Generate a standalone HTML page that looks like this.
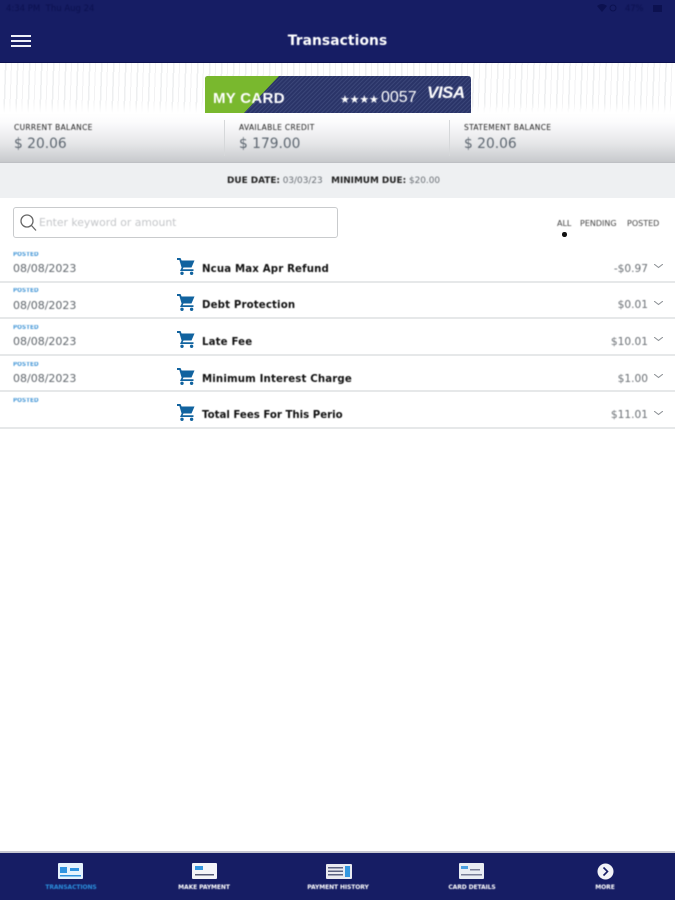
<!DOCTYPE html>
<html>
<head>
<meta charset="utf-8">
<style>
html,body{margin:0;padding:0;background:#fff}
#p{position:relative;width:675px;height:900px;overflow:hidden;background:#fff;font-family:"DejaVu Sans","Liberation Sans",sans-serif}
#p div,#p svg{position:absolute}
.t{white-space:nowrap;filter:blur(.45px)}
.lab{font-size:7.5px;color:#222;top:123px;letter-spacing:.33px}
.bal{font-size:13.8px;color:#5d6670;top:136px}
.sep{top:120px;width:1px;height:36px;background:#d6d8da}
.pos{font-size:5.7px;font-weight:bold;color:#4a9ad8;left:13px}
.date{font-size:11px;color:#60666c;left:13px}
.name{font-size:10.2px;font-weight:bold;color:#111;left:202px;letter-spacing:.15px}
.amt{font-size:10.6px;color:#6b7075;right:27px}
.line{left:0;width:675px;height:2px;background:#e6e8e9}
.nl{font-size:6px;font-weight:bold;color:#fff;top:884px;transform:translateX(-50%);letter-spacing:-.1px}
.f{font-size:8px;color:#444;top:219px}
</style>
</head>
<body>
<div id="p">
  <div style="left:0;top:0;width:675px;height:63px;background:#161d64;border-bottom:1px solid #0c1150;box-sizing:border-box"></div>
  <div class="t" style="left:6px;top:4px;font-size:8.5px;color:#0c1150">4:34 PM&nbsp;&nbsp;Thu Aug 24</div>
  <div class="t" style="left:625px;top:4px;font-size:8.5px;color:#0c1150;letter-spacing:-.2px">47%</div>
  <svg style="left:596px;top:3px" width="54" height="10" viewBox="0 0 54 10"><path d="M1 3Q6-1 11 3L6 9Z" fill="#0c1150"/><circle cx="17" cy="5" r="3" fill="none" stroke="#0c1150"/></svg>
  <div style="left:653px;top:5px;width:9px;height:7px;background:#0c1150"></div>

  <div style="left:11px;top:35px;width:20px;height:2px;background:#eef0f8"></div>
  <div style="left:11px;top:40px;width:20px;height:2px;background:#eef0f8"></div>
  <div style="left:11px;top:45px;width:20px;height:2px;background:#eef0f8"></div>
  <div class="t" style="left:0;width:675px;text-align:center;top:33px;font-size:13.8px;font-weight:bold;color:#fff;letter-spacing:.1px">Transactions</div>

  <div style="left:0;top:63px;width:675px;height:50px;background:repeating-linear-gradient(92deg,#fff 0,#fff 5px,#eeeff0 5px,#eeeff0 6.5px,#fff 6.5px,#fff 11px,#f2f2f3 11px,#f2f2f3 12px)"></div>
  <div style="left:0;top:103px;width:675px;height:10px;background:linear-gradient(rgba(255,255,255,0),#fff)"></div>

  <svg style="left:205px;top:76px" width="266" height="37" viewBox="0 0 266 37">
    <defs><pattern id="h" width="3" height="3" patternUnits="userSpaceOnUse" patternTransform="rotate(45)"><rect width="3" height="3" fill="#2a3468"/><rect width="1" height="3" fill="#3b4679"/></pattern></defs>
    <path d="M3 0H263Q266 0 266 3V37H0V3Q0 0 3 0Z" fill="url(#h)"/>
    <path d="M3 0H74L39 37H0V3Q0 0 3 0Z" fill="#79b82e"/>
  </svg>
  <div class="t" style="left:213px;top:90px;font-size:15px;font-weight:bold;color:#fff;font-family:'Liberation Sans',sans-serif;letter-spacing:.3px">MY CARD</div>
  <div class="t" style="left:340px;top:93px;font-size:11px;color:#fff;letter-spacing:-.2px">★★★★</div>
  <div class="t" style="left:381px;top:89px;font-size:16px;color:#fff;font-family:'Liberation Sans',sans-serif">0057</div>
  <div class="t" style="left:427px;top:83px;font-size:17px;font-weight:bold;font-style:italic;color:#fff;font-family:'Liberation Sans',sans-serif;letter-spacing:-.5px">VISA</div>

  <div style="left:0;top:113px;width:675px;height:50px;background:linear-gradient(#fff 0,#fbfbfc 20%,#e6e7e9 60%,#c8cacd 97%,#b9bbbf 100%)"></div>
  <div class="sep" style="left:224px"></div>
  <div class="sep" style="left:449px"></div>
  <div class="t lab" style="left:14px">CURRENT BALANCE</div>
  <div class="t bal" style="left:14px">$ 20.06</div>
  <div class="t lab" style="left:239px">AVAILABLE CREDIT</div>
  <div class="t bal" style="left:239px">$ 179.00</div>
  <div class="t lab" style="left:464px">STATEMENT BALANCE</div>
  <div class="t bal" style="left:464px">$ 20.06</div>

  <div style="left:0;top:163px;width:675px;height:35px;background:#eef0f2"></div>
  <div class="t" style="left:227px;top:176px;font-size:8.9px;color:#222"><b>DUE DATE:</b> <span style="color:#6a6f75">03/03/23</span>&nbsp;&nbsp; <b>MINIMUM DUE:</b> <span style="color:#6a6f75">$20.00</span></div>

  <div style="left:13px;top:207px;width:325px;height:31px;box-sizing:border-box;border:1.5px solid #c9cbcd;border-radius:3px;background:#fff"></div>
  <svg style="left:19px;top:213px" width="18" height="19" viewBox="0 0 18 19" fill="none" stroke="#666" stroke-width="1.3"><circle cx="8" cy="8" r="6"/><path d="M12.5 12.5L17 17.5"/></svg>
  <div class="t" style="left:39px;top:216px;font-size:10.8px;color:#c4c6c9">Enter keyword or amount</div>

  <div class="t f" style="left:557px">ALL</div>
  <div class="t f" style="left:580px">PENDING</div>
  <div class="t f" style="left:627px">POSTED</div>
  <div style="left:562px;top:232px;width:4.5px;height:4.5px;border-radius:50%;background:#111"></div>

  <svg width="0" height="0" style="left:0;top:0"><defs>
    <g id="c"><path d="M0 1H3.5L4.6 3.5H17.5L14.5 10.5H6.5L5.6 12.2H16.5V14H3L4.6 10.6L2.4 3H0Z" fill="#11639f"/><circle cx="5" cy="16.3" r="1.7" fill="#11639f"/><circle cx="14.6" cy="16.3" r="1.7" fill="#11639f"/></g>
    <path id="v" d="M0 0L4.5 3.5L9 0" fill="none" stroke="#8b8f93" stroke-width="1"/>
  </defs></svg>

  <div class="t pos" style="top:252px">POSTED</div>
  <div class="t date" style="top:262px">08/08/2023</div>
  <svg style="left:177px;top:257px" width="19" height="19"><use href="#c"/></svg>
  <div class="t name" style="top:264px">Ncua Max Apr Refund</div>
  <div class="t amt" style="top:263px">-$0.97</div>
  <svg style="left:654px;top:264px" width="9" height="5"><use href="#v"/></svg>
  <div class="line" style="top:281px"></div>

  <div class="t pos" style="top:288px">POSTED</div>
  <div class="t date" style="top:299px">08/08/2023</div>
  <svg style="left:177px;top:293px" width="19" height="19"><use href="#c"/></svg>
  <div class="t name" style="top:300px">Debt Protection</div>
  <div class="t amt" style="top:299px">$0.01</div>
  <svg style="left:654px;top:301px" width="9" height="5"><use href="#v"/></svg>
  <div class="line" style="top:317px"></div>

  <div class="t pos" style="top:325px">POSTED</div>
  <div class="t date" style="top:335px">08/08/2023</div>
  <svg style="left:177px;top:330px" width="19" height="19"><use href="#c"/></svg>
  <div class="t name" style="top:337px">Late Fee</div>
  <div class="t amt" style="top:336px">$10.01</div>
  <svg style="left:654px;top:337px" width="9" height="5"><use href="#v"/></svg>
  <div class="line" style="top:354px"></div>

  <div class="t pos" style="top:362px">POSTED</div>
  <div class="t date" style="top:372px">08/08/2023</div>
  <svg style="left:177px;top:367px" width="19" height="19"><use href="#c"/></svg>
  <div class="t name" style="top:374px">Minimum Interest Charge</div>
  <div class="t amt" style="top:373px">$1.00</div>
  <svg style="left:654px;top:374px" width="9" height="5"><use href="#v"/></svg>
  <div class="line" style="top:390px"></div>

  <div class="t pos" style="top:398px">POSTED</div>
  <svg style="left:177px;top:403px" width="19" height="19"><use href="#c"/></svg>
  <div class="t name" style="top:410px;letter-spacing:0">Total Fees For This Perio</div>
  <div class="t amt" style="top:409px">$11.01</div>
  <svg style="left:654px;top:411px" width="9" height="5"><use href="#v"/></svg>
  <div class="line" style="top:427px"></div>

  <div style="left:0;top:851px;width:675px;height:2px;background:#c7c8d2"></div>
  <div style="left:0;top:853px;width:675px;height:47px;background:#161d64"></div>

  <svg style="left:58px;top:863px" width="25" height="17" viewBox="0 0 25 17"><rect width="25" height="16" rx="1" fill="#e5f3fd"/><rect x="2" y="4" width="7" height="6" fill="#2f94e0"/><rect x="12" y="5" width="9" height="3" fill="#2f94e0"/><rect x="2" y="12" width="21" height="1.5" fill="#2f94e0"/></svg>
  <div class="t nl" style="left:71px;color:#2b8fdc">TRANSACTIONS</div>

  <svg style="left:192px;top:863px" width="25" height="17" viewBox="0 0 25 17"><rect width="25" height="16" rx="1" fill="#f3f4f8"/><rect x="3" y="3" width="8" height="4" fill="#3497de"/><rect x="3" y="11" width="19" height="1.5" fill="#555a75"/></svg>
  <div class="t nl" style="left:204px">MAKE PAYMENT</div>

  <svg style="left:326px;top:864px" width="26" height="16" viewBox="0 0 26 16"><rect width="26" height="15" rx="1" fill="#e9eaf0"/><g fill="#5b6180"><rect x="2" y="3" width="15" height="1.5"/><rect x="2" y="6.5" width="15" height="1.5"/><rect x="2" y="10" width="15" height="1.5"/></g><rect x="19" y="2" width="5" height="11" fill="#3497de"/></svg>
  <div class="t nl" style="left:338px">PAYMENT HISTORY</div>

  <svg style="left:459px;top:863px" width="25" height="17" viewBox="0 0 25 17"><rect width="25" height="16" rx="1" fill="#e9edf3"/><rect x="2" y="3" width="7" height="3" fill="#4ba0e0"/><rect x="11" y="6" width="10" height="1.5" fill="#7a8098"/><rect x="2" y="11" width="21" height="1.5" fill="#7a8098"/></svg>
  <div class="t nl" style="left:472px">CARD DETAILS</div>

  <svg style="left:597px;top:863px" width="17" height="17" viewBox="0 0 17 17"><circle cx="8.5" cy="8.5" r="8" fill="#f2f3f7"/><path d="M6.5 4.5L10.5 8.5L6.5 12.5" fill="none" stroke="#161d64" stroke-width="1.6"/></svg>
  <div class="t nl" style="left:605px">MORE</div>
</div>
</body>
</html>
